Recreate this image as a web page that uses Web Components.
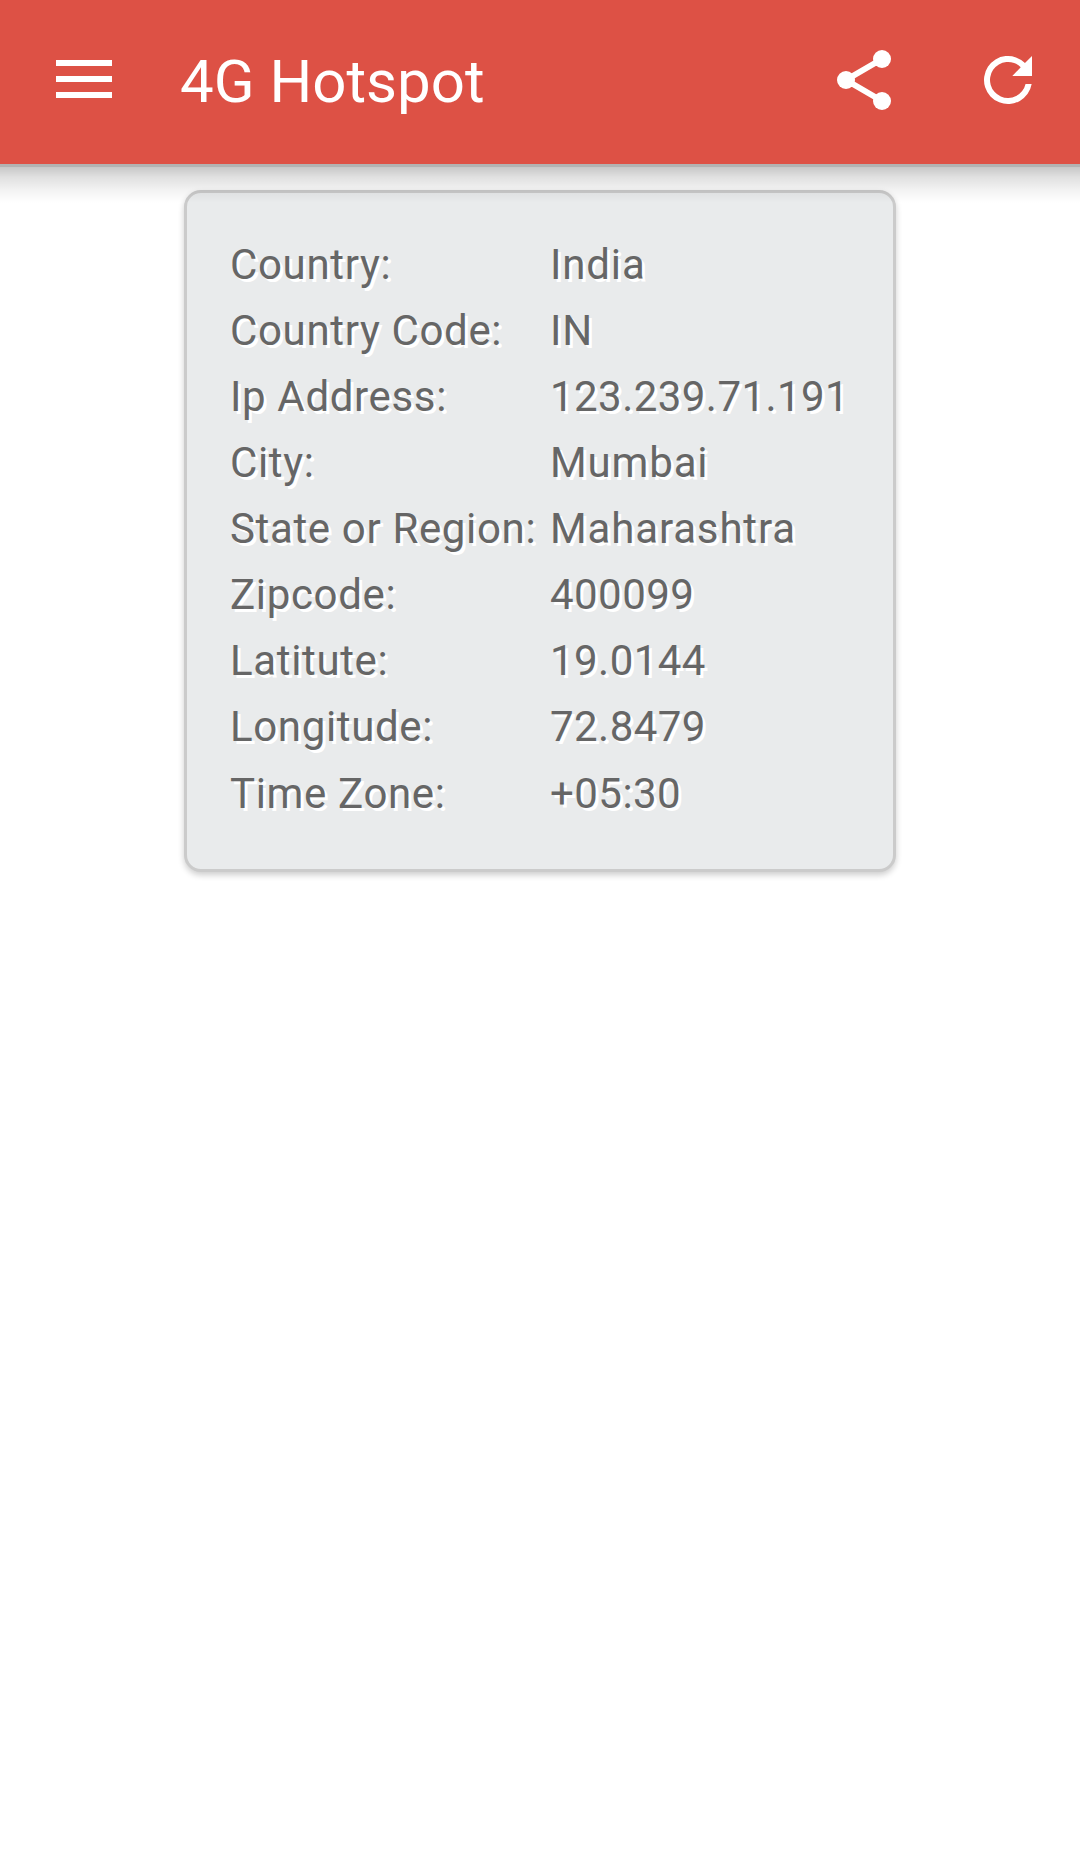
<!DOCTYPE html>
<html lang="en">
<head>
<meta charset="utf-8">
<title>4G Hotspot</title>
<style>
    body {
        margin: 0;
        min-height: 1856px;
        background: #fff;
        font-family: Roboto, sans-serif;
    }
    app-bar {
        position: relative;
        z-index: 1;
    }
</style>
</head>
<body>
<app-bar>4G Hotspot</app-bar>
<info-card>
    <info-row label="Country:">India</info-row>
    <info-row label="Country Code:">IN</info-row>
    <info-row label="Ip Address:" numeric>123.239.71.191</info-row>
    <info-row label="City:">Mumbai</info-row>
    <info-row label="State or Region:">Maharashtra</info-row>
    <info-row label="Zipcode:" numeric>400099</info-row>
    <info-row label="Latitute:" numeric>19.0144</info-row>
    <info-row label="Longitude:" numeric>72.8479</info-row>
    <info-row label="Time Zone:" numeric>+05:30</info-row>
</info-card>

<script>
const icons = {
    menu: '<path d="M8 16h56v6H8zM8 32h56v6H8zM8 48h56v6H8z"/>',
    share: `<circle cx="18" cy="36" r="9"/><circle cx="54" cy="15" r="9"/><circle cx="54" cy="57" r="9"/>
        <path d="M54 15L18 36l36 21" fill="none" stroke="#fff" stroke-width="6"/>`,
    refresh: `<path d="M59.660 40A24 24 0 1 1 52.970 19.030L60 12v20H40.300L48.730 23.270A18 18 0 1 0 53.550 40z"/>`
};

class AppIcon extends HTMLElement {
    constructor() {
        super();
        this.attachShadow({ mode: 'open' });
    }

    connectedCallback() {
        this.shadowRoot.innerHTML = `
            <style>
                :host {
                    display: block;
                    width: 72px;
                    height: 72px;
                }
                svg {
                    display: block;
                    fill: #fff;
                }
            </style>
            <svg width="72" height="72" viewBox="0 0 72 72">${icons[this.getAttribute('name')]}</svg>
        `;
    }
}

class AppBar extends HTMLElement {
    constructor() {
        super();
        this.attachShadow({ mode: 'open' });
        this.shadowRoot.innerHTML = `
            <style>
                :host {
                    display: block;
                    height: 164px;
                    background: #dd5145;
                }
                .bar {
                    display: flex;
                    align-items: center;
                    height: 160px;
                    padding: 0 36px 0 48px;
                }
                h1 {
                    flex: 1;
                    margin: 0;
                    padding: 4px 0 0 60px;
                    color: #fff;
                    font-size: 60px;
                    font-weight: 400;
                    line-height: 70px;
                }
                .share {
                    margin-right: 72px;
                }
                .shadow {
                    height: 39px;
                    margin-top: 4px;
                    background: linear-gradient(rgba(0,0,0,.3) 3px, rgba(0,0,0,.22) 3px, rgba(0,0,0,.12) 13px, rgba(0,0,0,.055) 25px, rgba(0,0,0,0));
                }
            </style>
            <div class="bar">
                <app-icon name="menu"></app-icon>
                <h1><slot></slot></h1>
                <app-icon class="share" name="share"></app-icon>
                <app-icon name="refresh"></app-icon>
            </div>
            <div class="shadow"></div>
        `;
    }
}

class InfoCard extends HTMLElement {
    constructor() {
        super();
        this.attachShadow({ mode: 'open' });
        this.shadowRoot.innerHTML = `
            <style>
                :host {
                    display: block;
                    box-sizing: border-box;
                    width: 712px;
                    height: 682px;
                    margin: 26px auto 0;
                    padding: 39px 42px 37px 43px;
                    border: 3px solid #cbcbcb;
                    border-radius: 17px;
                    background: #e9ebec;
                    box-shadow: 0 3px 6px rgba(0,0,0,.2);
                }
            </style>
            <slot></slot>
        `;
    }
}

class InfoRow extends HTMLElement {
    constructor() {
        super();
        this.attachShadow({ mode: 'open' });
    }

    connectedCallback() {
        this.shadowRoot.innerHTML = `
            <style>
                :host {
                    display: grid;
                    grid-template-columns: 320px 1fr;
                    height: 66.07px;
                    color: #666;
                    font-size: 42px;
                    line-height: 66px;
                    text-shadow: 3px 3px 0 #fff;
                    white-space: nowrap;
                }
                .label {
                    letter-spacing: .65px;
                }
                .value {
                    letter-spacing: .85px;
                }
                :host([numeric]) .value {
                    letter-spacing: .45px;
                }
            </style>
            <span class="label">${this.getAttribute('label')}</span>
            <span class="value"><slot></slot></span>
        `;
    }
}

customElements.define('app-icon', AppIcon);
customElements.define('app-bar', AppBar);
customElements.define('info-card', InfoCard);
customElements.define('info-row', InfoRow);
</script>
</body>
</html>
